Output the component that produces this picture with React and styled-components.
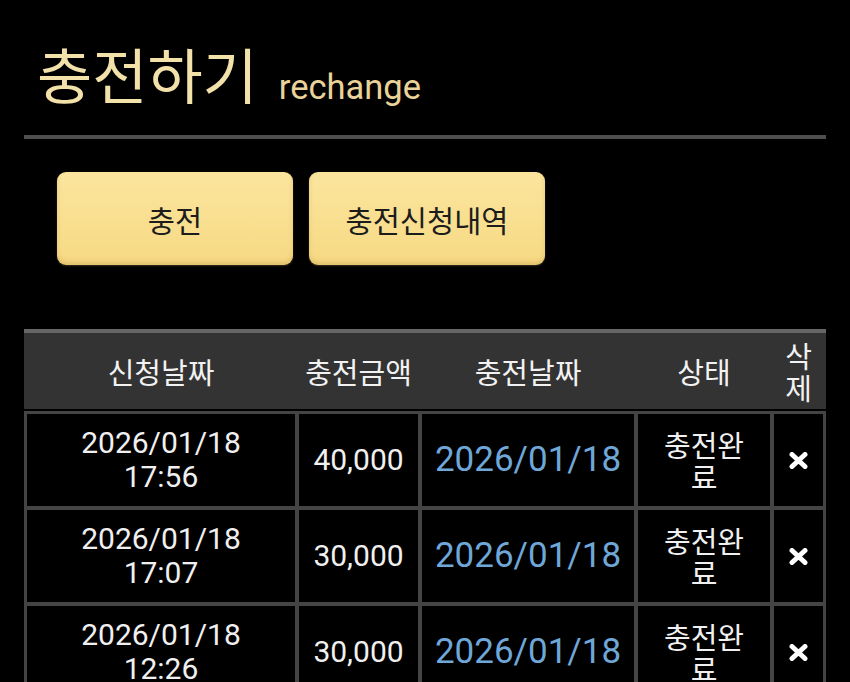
import React from 'react';
import styled, { createGlobalStyle } from 'styled-components';

const rows = [
  { date: '2026/01/18', time: '17:56', amount: '40,000', done: '2026/01/18', state: '충전완료' },
  { date: '2026/01/18', time: '17:07', amount: '30,000', done: '2026/01/18', state: '충전완료' },
  { date: '2026/01/18', time: '12:26', amount: '30,000', done: '2026/01/18', state: '충전완료' },
];

const cols = '268px 119px 212px 132px 49px';

function XIcon() {
  return (
    <svg width="19" height="17" viewBox="0 0 19 17">
      <path d="M3 2.5 L16 14.5 M16 2.5 L3 14.5" stroke="#fff" strokeWidth="5" strokeLinecap="round" />
    </svg>
  );
}

export default function App() {
  return (
    <Page>
      <GlobalStyle />
      <TitleBar>
        <Title>충전하기</Title>
        <Sub>rechange</Sub>
      </TitleBar>
      <Divider />
      <Buttons>
        <Btn>충전</Btn>
        <Btn>충전신청내역</Btn>
      </Buttons>
      <Table>
        <Head>
          <HCell>신청날짜</HCell>
          <HCell>충전금액</HCell>
          <HCell>충전날짜</HCell>
          <HCell>상태</HCell>
          <HCell narrow>삭제</HCell>
        </Head>
        <Body>
          {rows.map((r, i) => (
            <React.Fragment key={i}>
              <Cell>{r.date}<br />{r.time}</Cell>
              <Cell>{r.amount}</Cell>
              <Cell blue>{r.done}</Cell>
              <Cell pad>{r.state}</Cell>
              <Cell><XIcon /></Cell>
            </React.Fragment>
          ))}
        </Body>
      </Table>
    </Page>
  );
}

const GlobalStyle = createGlobalStyle`
  html, body {
    margin: 0;
    background: #000;
  }
  body {
    font-family: Roboto, "Noto Sans CJK KR", sans-serif;
    overflow: hidden;
  }
`

const Page = styled.div`
  padding: 0 24px;
  height: 682px;
  background: #000;
`

const TitleBar = styled.div`
  display: flex;
  align-items: baseline;
  padding: 43px 0 0 13px;
  height: 96px;
  box-sizing: border-box;
`

const Title = styled.h1`
  margin: 0;
  font-family: "Noto Sans CJK KR", sans-serif;
  font-weight: 400;
  font-size: 60px;
  line-height: 60px;
  color: #f3e1aa;
`

const Sub = styled.span`
  margin-left: 21px;
  font-family: Roboto, sans-serif;
  font-size: 34.5px;
  color: #ead39a;
`

const Divider = styled.div`
  margin-top: 39px;
  height: 4px;
  background: #4f4f4f;
`

const Buttons = styled.div`
  display: flex;
  gap: 16px;
  margin: 33px 0 0 33px;
`

const Btn = styled.button`
  width: 236px;
  height: 93px;
  border: none;
  border-radius: 9px;
  background: linear-gradient(#fbe59e, #f6d983);
  box-shadow: inset 0 -3px 4px rgba(160, 120, 40, 0.25), 0 1px 2px rgba(255, 230, 150, 0.2);
  font-family: "Noto Sans CJK KR", sans-serif;
  font-size: 29.5px;
  color: #1c1c1c;
  cursor: pointer;
`

const Table = styled.div`
  margin-top: 64px;
`

const Head = styled.div`
  display: grid;
  grid-template-columns: ${cols};
  column-gap: 4px;
  padding: 0 3px;
  height: 76px;
  border-top: 4px solid #666;
  background: #333;
  margin-bottom: 2px;
`

const HCell = styled.div`
  display: flex;
  align-items: center;
  justify-content: center;
  text-align: center;
  font-family: "Noto Sans CJK KR", sans-serif;
  font-size: 29px;
  line-height: 32px;
  color: #f2f2f2;
  width: ${p => (p.narrow ? '32px' : 'auto')};
  justify-self: center;
`

const Body = styled.div`
  display: grid;
  grid-template-columns: ${cols};
  grid-auto-rows: 92px;
  gap: 4px;
  padding: 3px;
  background: #444;
`

const Cell = styled.div`
  display: flex;
  align-items: center;
  justify-content: center;
  text-align: center;
  background: #000;
  color: ${p => (p.blue ? '#6fa7d9' : '#f0f0f0')};
  font-size: ${p => (p.blue ? '35px' : p.pad ? '29px' : '30px')};
  line-height: ${p => (p.pad ? '32px' : '34px')};
  padding: ${p => (p.pad ? '0 18px' : '0')};
  font-family: ${p => (p.pad ? '"Noto Sans CJK KR", sans-serif' : 'Roboto, "Noto Sans CJK KR", sans-serif')};
`
